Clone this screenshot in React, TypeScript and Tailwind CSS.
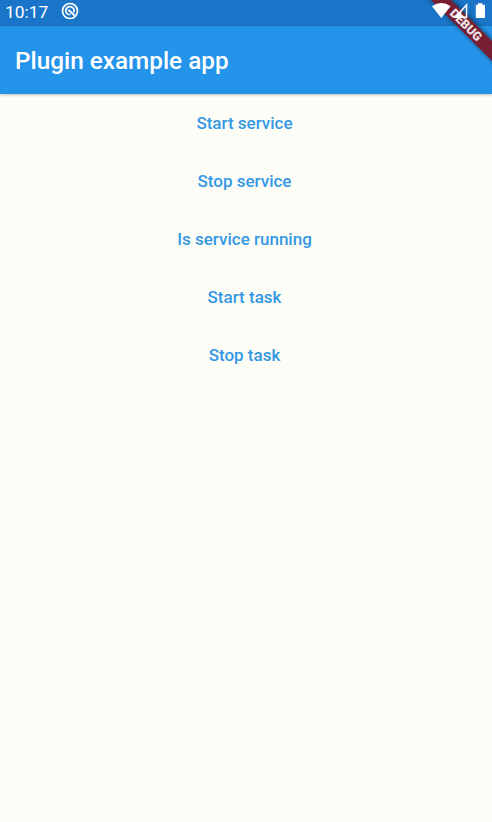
import React from "react";

const actions = [
  "Start service",
  "Stop service",
  "Is service running",
  "Start task",
  "Stop task",
];

function StatusBar() {
  return (
    <div className="flex h-[26px] items-center bg-[#1a74c8] pl-[5px] pr-[6px] text-white">
      <span className="w-[56px] text-[17.4px] leading-[24px] -mt-[3px]">10:17</span>
      <svg className="-mt-[4px] h-[18px] w-[18px]" viewBox="0 0 18 18" fill="none" stroke="white">
        <circle cx="9" cy="9" r="7.5" strokeWidth="1.7" />
        <path d="M5.4 11A4.2 4.2 0 1 1 12.8 10.4" strokeWidth="1.8" />
        <path d="M7.4 7.8 13.6 13.6" strokeWidth="2" />
        <path d="M5.4 11Q7 13 9.4 12.6" strokeWidth="1.4" />
      </svg>
    </div>
  );
}

function SystemIcons() {
  return (
    <svg className="absolute right-0 top-0 h-[26px] w-[64px]" viewBox="428 0 64 26" fill="white">
      <path d="M432 6.3Q441.3-.2 450.6 6.3L441.3 18Z" />
      <path fillRule="evenodd" d="M467.3 3V18H453.5ZM465.8 6.8 461.3 12V16.5H465.8Z" />
      <path d="M478 3.3h4.4v1.5h1.8q.8 0 .8.8V17.2q0 .8-.8.8h-7.6q-.8 0-.8-.8V5.6q0-.8.8-.8H478Z" />
    </svg>
  );
}

function DebugBanner() {
  return (
    <svg className="absolute right-0 top-0 h-[76px] w-[76px]" viewBox="416 0 76 76">
      <defs>
        <filter id="bannerShadow" x="-30%" y="-30%" width="160%" height="160%">
          <feGaussianBlur stdDeviation="2.5" />
        </filter>
      </defs>
      <path d="M427-4 496 65V43L449-4Z" fill="black" fillOpacity=".45" filter="url(#bannerShadow)" />
      <path d="M430-1 493 62V42L450-1Z" fill="#781e32" />
      <text
        transform="translate(465.8 25.2) rotate(45)"
        textAnchor="middle"
        dominantBaseline="central"
        fontSize="12.3"
        fontWeight="900"
        fill="#f0e4e8"
      >
        DEBUG
      </text>
    </svg>
  );
}

export default function App() {
  return (
    <div className="relative h-[822px] w-[492px] overflow-hidden bg-[#fdfdf8] font-[Roboto,sans-serif]">
      <StatusBar />
      <header className="relative flex h-[68px] items-center bg-[#2494ea] pl-[15px] pt-[1px] text-white shadow-[0_1px_3px_rgba(0,0,0,0.25)]">
        <h1 className="text-[24.3px] font-medium leading-[28px]">Plugin example app</h1>
      </header>
      <main className="flex flex-col items-center pr-[3px]">
        {actions.map((label) => (
          <button key={label} className="h-[58.1px] pt-[1px] text-[17px] font-medium text-[#3498e4]">
            {label}
          </button>
        ))}
      </main>
      <DebugBanner />
      <SystemIcons />
    </div>
  );
}
